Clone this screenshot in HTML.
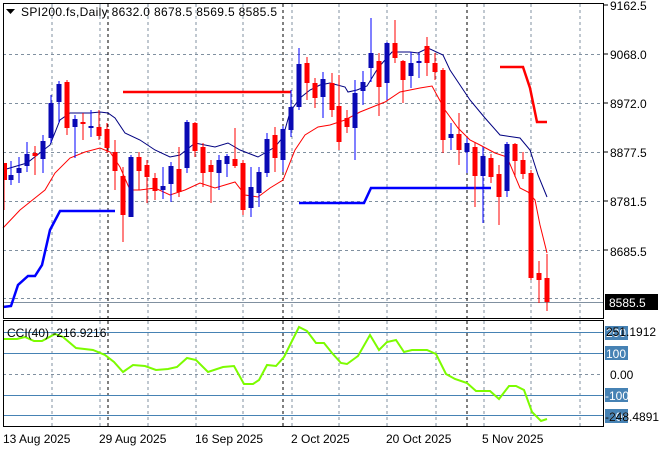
<!DOCTYPE html>
<html><head><style>
body{margin:0;background:#fff;width:660px;height:450px;overflow:hidden}
svg{display:block;font-family:"Liberation Sans",sans-serif;font-size:12px}
</style></head><body>
<svg width="660" height="450" xmlns="http://www.w3.org/2000/svg">
<rect width="660" height="450" fill="#fff"/>
<g stroke="#8090a0" stroke-dasharray="3,3" stroke-width="1">
<path d="M52 4V318M100 4V318M148 4V318M196 4V318M243 4V318M292 4V318M339 4V318M387 4V318M436 4V318M484 4V318M531 4V318M580 4V318"/>
<path d="M52 321V426M100 321V426M148 321V426M196 321V426M243 321V426M292 321V426M339 321V426M387 321V426M436 321V426M484 321V426M531 321V426M580 321V426"/>
<path d="M3 54.5H604M3 103.5H604M3 152.5H604M3 201.5H604M3 250.5H604M3 298.5H604M3 374.5H604"/>
</g>
<g stroke="#000" stroke-dasharray="3,3"><path d="M108 4V318M283 4V318M467 4V318M108 321V426M283 321V426M467 321V426"/></g>
<line x1="3" y1="302.5" x2="604" y2="302.5" stroke="#8090a0"/>
<g stroke="#4682b4"><path d="M3 332.5H604M3 353.5H604M3 395.5H604M3 415.5H604"/></g>
<polyline fill="none" stroke="#000080" stroke-width="1" points="3,170 27,163 50,145 60,120 70,113 90,113 100,112 108,113 115,118 125,133 140,140 155,150 170,157 180,155 195,143 215,147 228,143 240,150 258,157 275,147 283,137 290,112 300,98 310,90 320,85 330,83 345,87 348,92 357,90 367,86 378,68 392,52 410,52 418,53 428,48 443,55 450,70 470,100 485,118 500,135 520,138 530,150 538,175 547,197"/>
<polyline fill="none" stroke="#ff0000" stroke-width="1" points="3,228 20,210 35,198 45,190 55,173 70,158 85,152 100,148 110,152 120,167 130,190 140,190 155,188 170,195 185,190 200,183 215,188 235,182 245,195 258,197 270,188 283,180 295,150 305,135 318,127 330,125 345,120 360,112 385,102 400,92 420,88 432,86 445,110 458,128 470,140 480,145 495,153 507,157 520,188 528,192 535,200 540,225 547,253"/>
<polyline fill="none" stroke="#ff0000" stroke-width="2.5" points="123,92 291,92"/>
<polyline fill="none" stroke="#ff0000" stroke-width="2.5" points="500,67 523,67 530,88 537,122 547,122"/>
<polyline fill="none" stroke="#0000ff" stroke-width="2.5" points="3,307 11,306 18,285 28,276 35,276 42,265 50,230 60,211 115,211"/>
<polyline fill="none" stroke="#0000ff" stroke-width="2.5" points="299,203 364,203 371,188 491,188"/>
<g>
<g stroke="#ff0000" fill="#ff0000">
<path d="M4 163V210M35 146V175M67 80V135M83 113V140M99 110V140M107 123V153M115 140V190M123 167V242M139 152V190M147 160V203M155 173V200M179 147V197M195 122V157M203 143V187M211 160V203M235 128V168M243 160V215M275 127V172M307 57V100M315 78V108M332 73V117M339 75V150M347 110V133M379 53V116M395 20V63M403 60V103M427 37V76M435 53V80M443 68V153M459 113V165M475 142V207M491 154V183M499 165V225M515 143V177M523 152V179M531 170V280M539 261V303M547 254V311"/>
<g stroke="none">
<rect x="3" y="163" width="4" height="17"/><rect x="32.5" y="153" width="5" height="3"/><rect x="64.5" y="82" width="5" height="46"/><rect x="80.5" y="122" width="5" height="2"/><rect x="96.5" y="127" width="5" height="9"/><rect x="104.5" y="129" width="5" height="19"/><rect x="112.5" y="152" width="5" height="19"/><rect x="120.5" y="176" width="5" height="39"/><rect x="136.5" y="157" width="5" height="14"/><rect x="144.5" y="165" width="5" height="12"/><rect x="152.5" y="178" width="5" height="13"/><rect x="176.5" y="169" width="5" height="23"/><rect x="192.5" y="123" width="5" height="28"/><rect x="200.5" y="147" width="5" height="26"/><rect x="208.5" y="165" width="5" height="7"/><rect x="232.5" y="159" width="5" height="7"/><rect x="240.5" y="163" width="5" height="47"/><rect x="272.5" y="135" width="5" height="23"/><rect x="304.5" y="63" width="5" height="20"/><rect x="312.5" y="83" width="5" height="15"/><rect x="329.5" y="83" width="5" height="27"/><rect x="336.5" y="106" width="5" height="36"/><rect x="344.5" y="118" width="5" height="9"/><rect x="376.5" y="61" width="5" height="26"/><rect x="392.5" y="43" width="5" height="15"/><rect x="400.5" y="61" width="5" height="19"/><rect x="424.5" y="46" width="5" height="17"/><rect x="432.5" y="63" width="5" height="9"/><rect x="440.5" y="70" width="5" height="70"/><rect x="456.5" y="134" width="5" height="16"/><rect x="472.5" y="147" width="5" height="29"/><rect x="488.5" y="158" width="5" height="19"/><rect x="496.5" y="174" width="5" height="23"/><rect x="512.5" y="144" width="5" height="17"/><rect x="520.5" y="160" width="5" height="14"/><rect x="528.5" y="173" width="5" height="105"/><rect x="536.5" y="273" width="5" height="7"/><rect x="544.5" y="278" width="5" height="24"/>
</g></g>
<g stroke="#0000ff">
<path d="M11 161V185M19 157V183M27 142V172M43 135V173M51 95V143M59 81V123M75 115V158M91 110V137M131 155V217M163 167V199M171 162V202M187 120V173M219 155V190M227 154V177M251 167V217M259 167V207M267 133V177M283 126V172M291 90V137M299 48V110M323 72V118M355 80V160M363 71V105M371 18V82M387 42V100M411 52V88M419 53V78M451 123V150M467 138V173M483 147V223M507 142V197"/>
</g>
<g fill="#0a0ab4">
<rect x="8.5" y="175" width="5" height="5"/><rect x="16.5" y="168" width="5" height="5"/><rect x="24.5" y="154" width="5" height="12"/><rect x="40.5" y="141" width="5" height="18"/><rect x="48.5" y="103" width="5" height="35"/><rect x="56.5" y="84" width="5" height="18"/><rect x="72.5" y="119" width="5" height="8"/><rect x="88.5" y="126" width="5" height="2"/><rect x="128.5" y="157" width="5" height="60"/><rect x="160.5" y="186" width="5" height="4"/><rect x="168.5" y="166" width="5" height="18"/><rect x="184.5" y="122" width="5" height="46"/><rect x="216.5" y="160" width="5" height="13"/><rect x="224.5" y="156" width="5" height="8"/><rect x="248.5" y="187" width="5" height="21"/><rect x="256.5" y="172" width="5" height="21"/><rect x="264.5" y="139" width="5" height="34"/><rect x="280.5" y="129" width="5" height="31"/><rect x="288.5" y="107" width="5" height="23"/><rect x="296.5" y="64" width="5" height="43"/><rect x="320.5" y="79" width="5" height="18"/><rect x="352.5" y="93" width="5" height="35"/><rect x="360.5" y="82" width="5" height="9"/><rect x="368.5" y="53" width="5" height="15"/><rect x="384.5" y="43" width="5" height="40"/><rect x="408.5" y="63" width="5" height="13"/><rect x="416.5" y="61" width="5" height="2"/><rect x="448.5" y="134" width="5" height="4"/><rect x="464.5" y="143" width="5" height="9"/><rect x="480.5" y="156" width="5" height="20"/><rect x="504.5" y="144" width="5" height="47"/>
</g>
</g>
<polyline fill="none" stroke="#7cfc00" stroke-width="2" points="3,339 17,339 25,337 34,341 42,341 55,334 63,337 76,348 93,350 105,355 114,362 123,372 133,365 145,366 156,370 168,369 177,367 187,358 196,360 208,372 223,367 234,366 244,384 253,384 259,380 267,365 276,366 284,357 299,327 307,331 316,343 324,343 332,353 341,363 347,364 358,356 370,335 379,350 387,342 396,340 404,352 412,350 427,350 436,354 446,374 455,379 467,383 476,391 490,391 499,399 509,386 516,386 524,390 532,412 541,421 547,419"/>
<rect x="3.5" y="3.5" width="600" height="315" fill="none" stroke="#000"/>
<rect x="3.5" y="320.5" width="600" height="106" fill="none" stroke="#000"/>
<g stroke="#000"><path d="M604 5h4M604 54h4M604 103h4M604 152h4M604 201h4M604 250h4"/></g>
<path d="M6 9h9l-4.5 5z" fill="#000"/>
<text x="21" y="16" fill="#000" textLength="256" lengthAdjust="spacing">SPI200.fs,Daily  8632.0 8678.5 8569.5 8585.5</text>
<text x="7" y="337" fill="#000">CCI(40) -216.9216</text>
<g fill="#000">
<text x="610" y="10">9162.5</text><text x="610" y="59">9068.0</text><text x="610" y="108">8972.0</text><text x="610" y="157">8877.5</text><text x="610" y="206">8781.5</text><text x="610" y="256">8685.5</text><text x="610" y="379">0.00</text>
</g>
<rect x="605" y="294" width="53" height="16" fill="#000"/>
<text x="609" y="307" fill="#fff">8585.5</text>
<g fill="#4682b4"><rect x="605" y="326" width="23" height="14"/><rect x="605" y="346" width="23" height="14"/><rect x="605" y="388" width="23" height="14"/><rect x="605" y="409" width="23" height="14"/></g>
<g fill="#fff"><text x="606" y="337">200</text><text x="606" y="358">100</text><text x="605" y="400">-100</text><text x="605" y="421">-200</text></g>
<g fill="#000"><text x="606" y="336">251.1912</text><text x="605" y="421">-248.4891</text></g>
<g fill="#000"><text x="3" y="443">13 Aug 2025</text><text x="99" y="443">29 Aug 2025</text><text x="195" y="443">16 Sep 2025</text><text x="291" y="443">2 Oct 2025</text><text x="386" y="443">20 Oct 2025</text><text x="482" y="443">5 Nov 2025</text></g>
</svg>
</body></html>
